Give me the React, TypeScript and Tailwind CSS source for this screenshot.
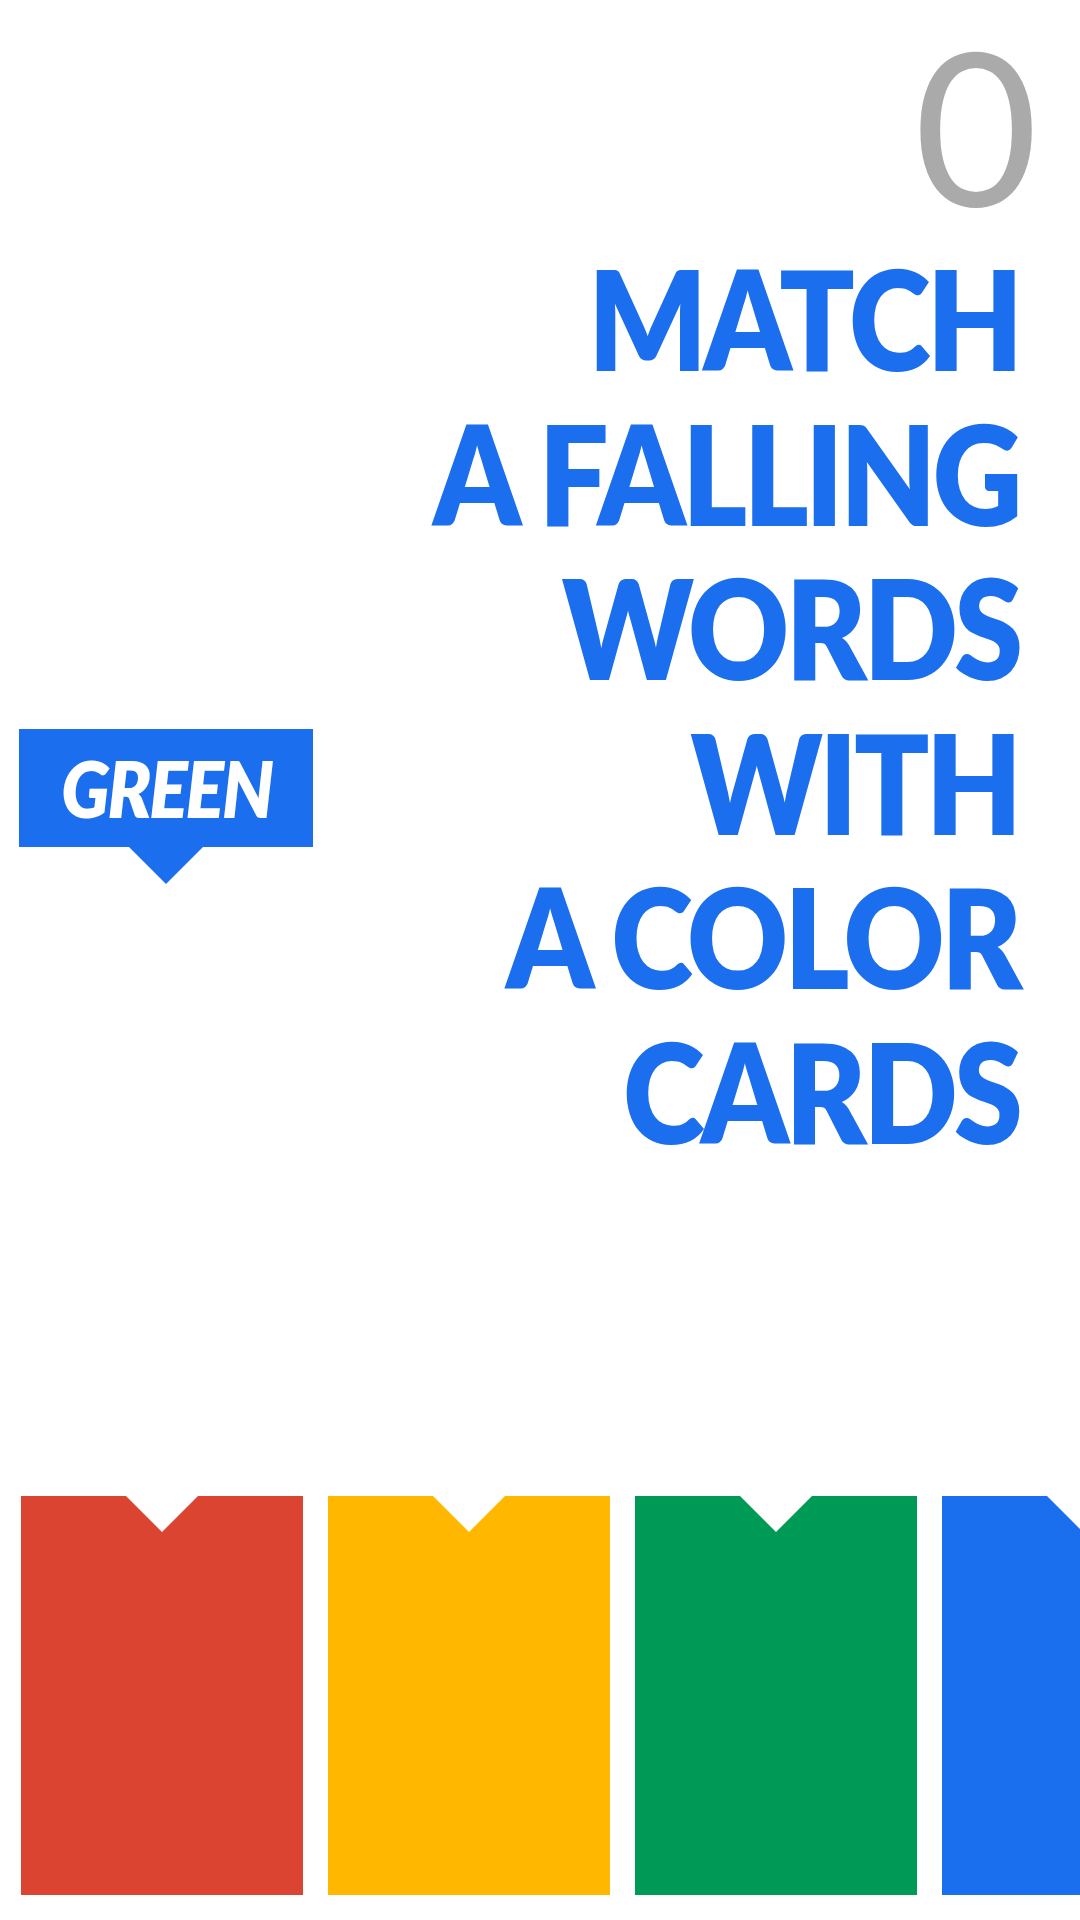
import React from 'react';

const lines = ['MATCH', 'A FALLING', 'WORDS', 'WITH', 'A COLOR', 'CARDS'];

function Card({ color }: { color: string }) {
  return (
    <div
      className={`h-[399px] w-[282px] shrink-0 [clip-path:polygon(0_0,calc(50%_-_36px)_0,50%_36px,calc(50%_+_36px)_0,100%_0,100%_100%,0_100%)] ${color}`}
    />
  );
}

export default function App() {
  return (
    <div className="relative flex h-[1920px] w-[1080px] flex-col overflow-hidden bg-white font-['Lato',sans-serif]">
      <div className="flex justify-end pr-[42px] pt-[6px]">
        <span className="text-[214px] font-normal leading-[1.1] text-[#aaaaaa]">0</span>
      </div>

      <div className="flex flex-col items-end pr-[61px] text-[138px] font-extrabold leading-[154.5px] text-[#1b6fee]">
        {lines.map((line) => (
          <div key={line} className="origin-right scale-x-[0.9] tracking-[-0.03em]">
            {line}
          </div>
        ))}
      </div>

      {/* falling word */}
      <div className="absolute left-[19px] top-[729px] flex flex-col items-center">
        <div className="flex h-[118px] w-[294px] items-center justify-center bg-[#1b6fee]">
          <span className="scale-x-[0.92] text-[78px] font-extrabold italic leading-none tracking-[-0.03em] text-white">GREEN</span>
        </div>
        <div className="h-0 w-0 border-x-[37px] border-t-[37px] border-x-transparent border-t-[#1b6fee]" />
      </div>

      <div className="mt-auto mb-[25px] flex gap-[25px] pl-[21px]">
        <Card color="bg-[#db4430]" />
        <Card color="bg-[#ffb700]" />
        <Card color="bg-[#009a57]" />
        <Card color="bg-[#1a6fee]" />
      </div>
    </div>
  );
}
